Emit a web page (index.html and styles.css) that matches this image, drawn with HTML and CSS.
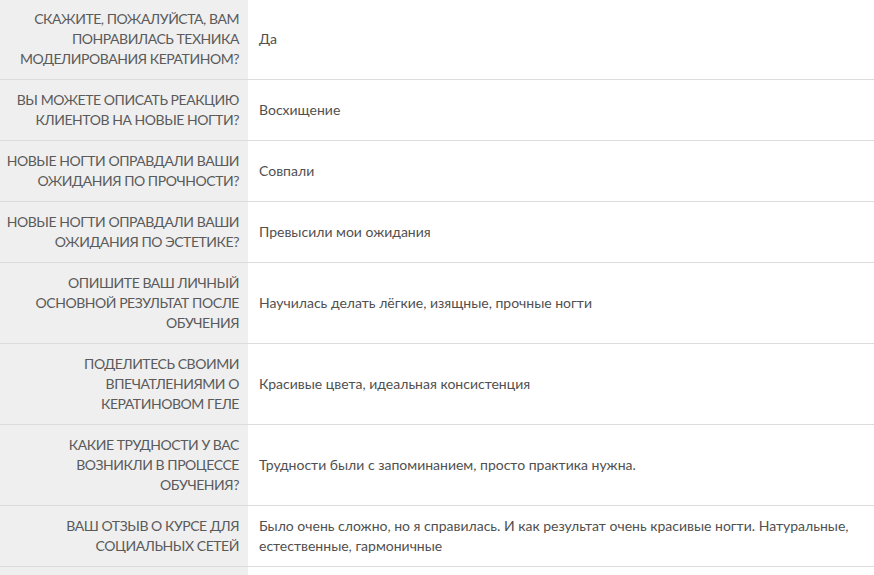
FILE: index.html
```html
<!DOCTYPE html>
<html lang="ru">
<head>
    <meta charset="UTF-8">
    <meta name="viewport" content="width=device-width, initial-scale=1.0">
    <title>Анкета</title>
    <link rel="stylesheet" href="styles.css">
</head>
<body>
    <table class="answers">
        <colgroup>
            <col class="col-question">
            <col>
        </colgroup>
        <tr>
            <th>Скажите, пожалуйста, вам<br>понравилась техника<br>моделирования кератином?</th>
            <td>Да</td>
        </tr>
        <tr>
            <th>Вы можете описать реакцию<br>клиентов на новые ногти?</th>
            <td>Восхищение</td>
        </tr>
        <tr>
            <th>Новые ногти оправдали ваши<br>ожидания по прочности?</th>
            <td>Совпали</td>
        </tr>
        <tr>
            <th>Новые ногти оправдали ваши<br>ожидания по эстетике?</th>
            <td>Превысили мои ожидания</td>
        </tr>
        <tr>
            <th>Опишите ваш личный<br>основной результат после<br>обучения</th>
            <td>Научилась делать лёгкие, изящные, прочные ногти</td>
        </tr>
        <tr>
            <th>Поделитесь своими<br>впечатлениями о<br>кератиновом геле</th>
            <td>Красивые цвета, идеальная консистенция</td>
        </tr>
        <tr>
            <th>Какие трудности у вас<br>возникли в процессе<br>обучения?</th>
            <td>Трудности были с запоминанием, просто практика нужна.</td>
        </tr>
        <tr>
            <th>Ваш отзыв о курсе для<br>социальных сетей</th>
            <td>Было очень сложно, но я справилась. И как результат очень красивые ногти. Натуральные, естественные, гармоничные</td>
        </tr>
        <tr class="empty">
            <th></th>
            <td></td>
        </tr>
    </table>
</body>
</html>
```

FILE: styles.css
```css
body {
    margin: 0;
    font-family: Lato, "Open Sans", sans-serif;
    font-size: 14px;
    line-height: 20px;
    color: #505050;
    background-color: #fff;
    overflow: hidden;
}
.answers {
    width: 100%;
    margin-top: -1px;
    border-collapse: collapse;
    table-layout: fixed;
}
.col-question {
    width: 248px;
}
.answers tr {
    border-bottom: 1px solid #dcdcdc;
}
.answers th {
    padding: 10px 9px 10px 0;
    background-color: #efefef;
    color: #5a5a5a;
    font-weight: normal;
    letter-spacing: -0.45px;
    text-align: right;
    text-transform: uppercase;
    white-space: nowrap;
    vertical-align: middle;
}
.answers td {
    padding: 10px 10px 10px 11px;
    vertical-align: middle;
}
.answers .empty th,
.answers .empty td {
    height: 40px;
}
```
